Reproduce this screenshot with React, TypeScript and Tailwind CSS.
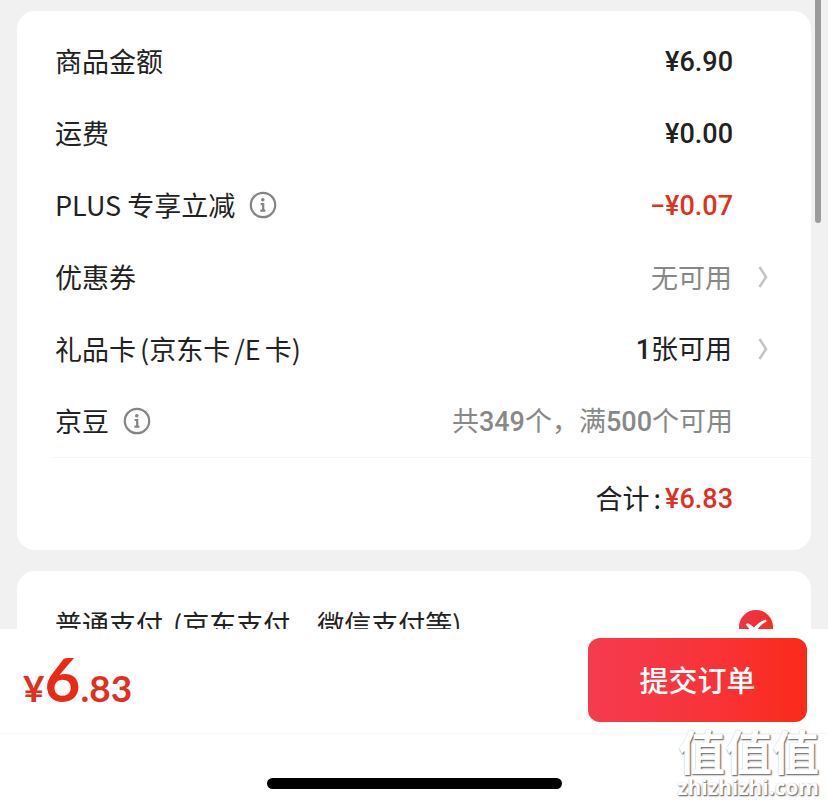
import type { ReactNode } from "react";

const CJK = "font-['Noto_Sans_CJK_SC',sans-serif]";

function Num({ children }: { children: ReactNode }) {
  return <span className="font-['Roboto',sans-serif] text-[27px] font-medium">{children}</span>;
}

function InfoButton({ label }: { label: string }) {
  return (
    <button type="button" aria-label={label} className="ml-[14px] text-[#848484]">
      <svg width="28" height="28" viewBox="0 0 28 28" fill="none" stroke="currentColor" className="block">
        <circle cx="14" cy="14" r="12.2" strokeWidth="2.2" />
        <circle cx="13.8" cy="8.8" r="1.8" fill="currentColor" stroke="none" />
        <path d="M11.6 13h2.6v6.6M11.4 19.6h5" strokeWidth="2.2" />
      </svg>
    </button>
  );
}

function Chevron() {
  return (
    <svg width="10" height="24" viewBox="0 0 10 24" fill="none" stroke="#c4c4c4" strokeWidth="2.6" className="block">
      <path d="M1.5 2 8 12 1.5 22" />
    </svg>
  );
}

function Row({ label, info, children }: { label: ReactNode; info?: string; children: ReactNode }) {
  return (
    <li className="flex h-[72px] items-center justify-between pl-[38px]">
      <div className="flex items-center">
        <span>{label}</span>
        {info && <InfoButton label={info} />}
      </div>
      {children}
    </li>
  );
}

function Value({ children, className = "" }: { children: ReactNode; className?: string }) {
  return <span className={`pr-[78px] ${className}`}>{children}</span>;
}

function LinkValue({ children, className = "" }: { children: ReactNode; className?: string }) {
  return (
    <a href="#" className={`flex items-center gap-[26px] pr-[43px] ${className}`}>
      <span>{children}</span>
      <Chevron />
    </a>
  );
}

export default function App() {
  return (
    <div className={`relative flex h-screen flex-col overflow-hidden bg-[#f1f1f1] text-[27px] leading-10 text-[#222] ${CJK}`}>
      <main className="relative min-h-0 flex-1 overflow-hidden px-[17px] pt-[11px]">
        <section className="rounded-[18px] bg-white pt-[14px] pb-[13px]">
          <ul>
            <Row label="商品金额">
              <Value><Num>¥6.90</Num></Value>
            </Row>
            <Row label="运费">
              <Value><Num>¥0.00</Num></Value>
            </Row>
            <Row label={<>PLUS<span className="ml-1.5">专享立减</span></>} info="PLUS专享立减说明">
              <Value className="text-[#dc3420]"><Num>−¥0.07</Num></Value>
            </Row>
            <Row label="优惠券">
              <LinkValue className="text-[#888]">无可用</LinkValue>
            </Row>
            <Row label={<>礼品卡<span className="ml-1">(京东卡</span><span className="ml-1">/E</span><span className="ml-1">卡)</span></>}>
              <LinkValue>
                <Num>1</Num>张可用
              </LinkValue>
            </Row>
            <Row label="京豆" info="京豆说明">
              <Value className="text-[#888]">
                共<Num>349</Num>个，满<Num>500</Num>个可用
              </Value>
            </Row>
          </ul>
          <div className="ml-9 flex h-20 items-center justify-end border-t border-[#f4f4f4]">
            <span>合计</span>
            <span className="mx-1">:</span>
            <Value className="text-[#e1301f]"><Num>¥6.83</Num></Value>
          </div>
        </section>

        <section className="mt-[21px] rounded-t-[18px] bg-white pt-[33px] pb-8">
          <label className="flex items-end justify-between px-[38px]">
            <span>
              普通支付<span className="ml-2.5">(京东支付、微信支付等)</span>
            </span>
            <span className="relative block size-[34px]">
              <input type="radio" name="payment" defaultChecked className="block size-[34px] appearance-none rounded-full bg-linear-to-r from-[#ef3347] to-[#f32e24]" />
              <svg width="34" height="34" viewBox="0 0 34 34" fill="#fff" className="pointer-events-none absolute inset-0">
                <path d="M6.6 14.6 8.6 13.2C11 14.2 13 15.6 15 17.6 18.5 13.6 22 11 27 9.6L27.6 11.4C22.5 14.2 18.6 18 15.4 24.2H13.6C11.6 20.4 9.6 17.4 6.6 14.6Z" />
              </svg>
            </span>
          </label>
        </section>

        <div className="absolute top-0 right-[7px] h-[223px] w-[6px] rounded-b-full bg-[#9b9b9b]" />
      </main>

      <footer className="bg-white">
        <div className="flex h-[105px] items-center justify-between border-b border-[#f7f7f7] pr-[21px] pb-0.5 pl-[23px]">
          <p className="pt-1.5 font-['Lato',sans-serif] text-[37px] leading-[60px] font-bold text-[#e0301e]">
            ¥<span className="text-[62px] text-[#ea2a14]">6</span>.83
          </p>
          <button type="button" className="h-21 w-[219px] rounded-xl bg-linear-to-r from-[#f53b50] to-[#fb2a18] pb-0.5 text-[29px] font-medium text-white">
            提交订单
          </button>
        </div>
        <div className="flex h-[72px] justify-center pt-[44px]">
          <div className="h-[11px] w-[295px] rounded-full bg-black" />
        </div>
      </footer>

      <div className="pointer-events-none absolute right-[9px] bottom-[7px] flex flex-col items-end text-white [text-shadow:1px_1px_1px_#777,1px_1px_2px_#999,0_0_1px_#ccc]">
        <span className="text-[47px] leading-[50px] font-bold">值值值</span>
        <span className="font-['Open_Sans',sans-serif] text-[21px] leading-6 font-bold">zhizhizhi.com</span>
      </div>
    </div>
  );
}
